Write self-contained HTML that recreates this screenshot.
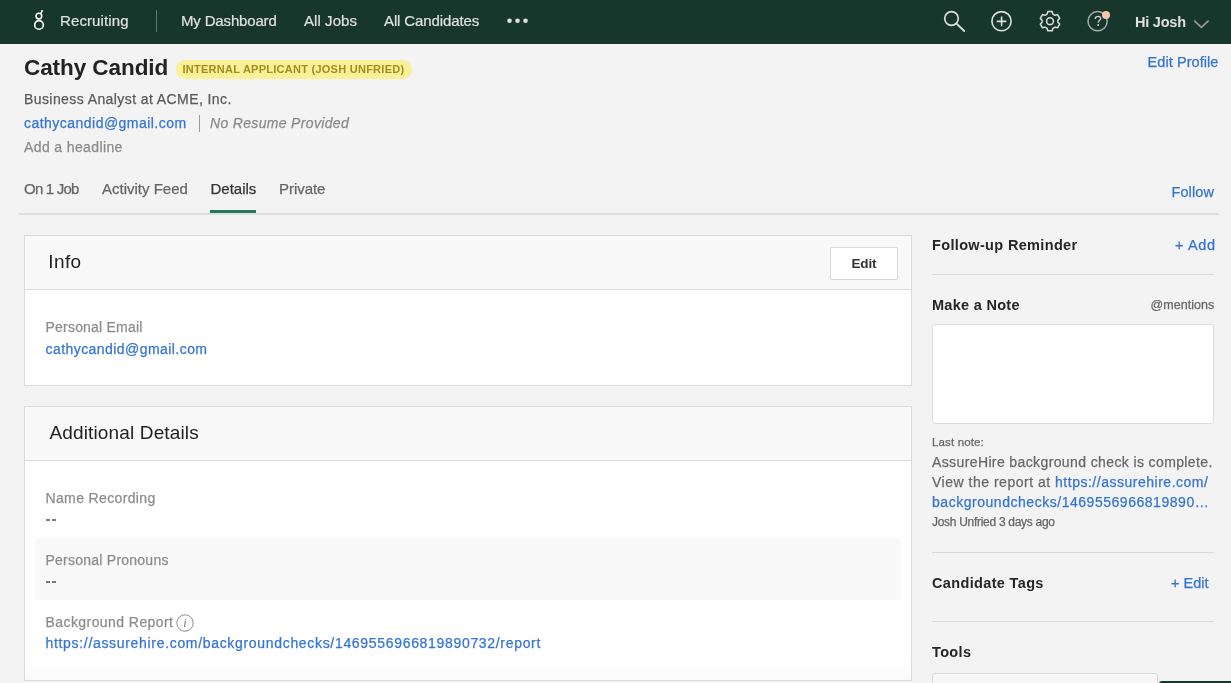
<!DOCTYPE html>
<html><head><meta charset="utf-8">
<style>
*{box-sizing:border-box;margin:0;padding:0}
html,body{-webkit-font-smoothing:antialiased;width:1231px;height:683px;overflow:hidden;background:#f3f3f3;font-family:"Liberation Sans",sans-serif;color:#222}
.t{position:absolute;white-space:nowrap;line-height:1}
.t:not(.rh):not([style*="font-weight:bold"]){-webkit-text-stroke:0.25px currentColor}
.nt:not([style*="font-weight:bold"]){-webkit-text-stroke:0.2px currentColor}
.abs{position:absolute}
.lk{color:#3574d4}
#nav{position:absolute;left:0;top:0;width:1231px;height:44px;background:#17372d}
.nt{position:absolute;top:12.8px;font-size:15px;color:#e0e0e0;line-height:1;white-space:nowrap}
.lbl{font-size:14px;color:#8c8c8c}
.rh{font-size:14.5px;font-weight:bold;color:#262626}
.hr{position:absolute;left:932px;width:282px;height:1px;background:#dadada}
</style></head>
<body><div id="root" style="position:absolute;left:0;top:0;width:1231px;height:683px;will-change:transform">
<div id="nav">
  <svg class="abs" style="left:0;top:0" width="1231" height="44" viewBox="0 0 1231 44">
    <!-- logo -->
    <circle cx="39" cy="24.9" r="4.3" fill="none" stroke="#fff" stroke-width="1.6"/>
    <circle cx="38.9" cy="16.1" r="2.85" fill="none" stroke="#fff" stroke-width="1.5"/>
    <path d="M40.5 13.7 L42 11.4" stroke="#fff" stroke-width="1.4" fill="none"/>
    <circle cx="42.1" cy="11" r="1.05" fill="#fff"/>
    <!-- separator -->
    <rect x="156" y="10" width="1" height="22" fill="#5f766d"/>
    <!-- dots -->
    <circle cx="509.5" cy="20.8" r="2.3" fill="#e0e0e0"/>
    <circle cx="517.5" cy="20.8" r="2.3" fill="#e0e0e0"/>
    <circle cx="525.5" cy="20.8" r="2.3" fill="#e0e0e0"/>
    <!-- search -->
    <circle cx="951.5" cy="18.5" r="6.8" fill="none" stroke="#dedede" stroke-width="1.7"/>
    <path d="M956.3 23.3 L964.2 31" stroke="#dedede" stroke-width="1.8" stroke-linecap="round"/>
    <!-- plus -->
    <circle cx="1001.5" cy="21.2" r="9.6" fill="none" stroke="#dedede" stroke-width="1.6"/>
    <path d="M996.8 21.4 H1006.4 M1001.6 16.6 V26.2" stroke="#dedede" stroke-width="1.6"/>
    <!-- gear -->
    <g transform="translate(1050 21.2)" fill="none" stroke="#dedede" stroke-width="1.5">
      <path d="M-2.2 -9.6 L2.2 -9.6 L2.9 -7.1 L5.0 -5.9 L7.5 -6.6 L9.7 -2.8 L7.9 -1.0 L7.9 1.0 L9.7 2.8 L7.5 6.6 L5.0 5.9 L2.9 7.1 L2.2 9.6 L-2.2 9.6 L-2.9 7.1 L-5.0 5.9 L-7.5 6.6 L-9.7 2.8 L-7.9 1.0 L-7.9 -1.0 L-9.7 -2.8 L-7.5 -6.6 L-5.0 -5.9 L-2.9 -7.1 Z" stroke-linejoin="round"/>
      <circle cx="0" cy="0" r="3.4"/>
    </g>
    <!-- help -->
    <circle cx="1097.6" cy="21.2" r="9.6" fill="none" stroke="#a9a9a9" stroke-width="1.5"/>
    <path d="M1095.3 18.9 C1095.3 17.2 1096.5 16.3 1098 16.3 C1099.6 16.3 1100.7 17.3 1100.7 18.6 C1100.7 20.2 1098.2 20.6 1098.2 22.7" fill="none" stroke="#d0d0d0" stroke-width="1.3"/><circle cx="1098.2" cy="25" r="0.95" fill="#d0d0d0"/>
    <circle cx="1106" cy="14.9" r="4" fill="#f5c6aa"/>
    <!-- chevron -->
    <path d="M1194.2 20.6 L1201.4 27.4 L1208.6 20.6" fill="none" stroke="#9a9a9a" stroke-width="1.6"/>
  </svg>
  <div class="nt" style="left:60px;letter-spacing:0.11px">Recruiting</div>
  <div class="nt" style="left:181px;letter-spacing:-0.16px">My Dashboard</div>
  <div class="nt" style="left:304px;letter-spacing:0.06px">All Jobs</div>
  <div class="nt" style="left:384px;letter-spacing:-0.12px">All Candidates</div>
  <div class="nt" style="left:1135px;top:15px;font-size:14.5px;font-weight:bold;letter-spacing:-0.23px">Hi Josh</div>
</div>

<div class="t" style="left:24px;top:56.9px;font-size:22.5px;font-weight:bold;color:#222;letter-spacing:-0.07px">Cathy Candid</div>
<div class="abs" style="left:176px;top:60px;height:19px;width:236px;background:#faf098;border-radius:10px"></div>
<div class="t" style="left:182.5px;top:63.7px;font-size:11px;font-weight:bold;color:#a48c1c;letter-spacing:0.26px">INTERNAL APPLICANT (JOSH UNFRIED)</div>
<div class="t lk" style="left:1147.6px;top:54.7px;font-size:14.5px;letter-spacing:0.06px">Edit Profile</div>
<div class="t" style="left:24px;top:92.3px;font-size:14px;color:#5a5a5a;letter-spacing:0.415px">Business Analyst at ACME, Inc.</div>
<div class="t lk" style="left:24px;top:116px;font-size:14px;letter-spacing:0.47px">cathycandid@gmail.com</div>
<div class="abs" style="left:199px;top:115px;width:1px;height:17px;background:#9a9a9a"></div>
<div class="t" style="left:210px;top:116px;font-size:14px;font-style:italic;color:#8a8a8a;letter-spacing:0.33px">No Resume Provided</div>
<div class="t" style="left:24px;top:140.2px;font-size:14px;color:#8a8a8a;letter-spacing:0.38px">Add a headline</div>

<div class="t" style="left:24px;top:181.3px;font-size:15px;color:#666;letter-spacing:-0.79px">On 1 Job</div>
<div class="t" style="left:102px;top:181.3px;font-size:15px;color:#666">Activity Feed</div>
<div class="t" style="left:210.5px;top:181.3px;font-size:15px;color:#333;letter-spacing:0px">Details</div>
<div class="t" style="left:279px;top:181.3px;font-size:15px;color:#666;letter-spacing:-0.05px">Private</div>
<div class="t lk" style="left:1171.5px;top:184.7px;font-size:14.5px;letter-spacing:0.1px">Follow</div>
<div class="abs" style="left:19px;top:213px;width:1200px;height:2px;background:#dedede"></div>
<div class="abs" style="left:210px;top:210px;width:46px;height:3px;background:#23795a"></div>

<!-- Info card -->
<div class="abs" style="left:24px;top:235px;width:888px;height:151px;background:#fff;border:1px solid #dcdcdc"></div>
<div class="abs" style="left:25px;top:236px;width:886px;height:54px;background:#f9f9f9;border-bottom:1px solid #dcdcdc"></div>
<div class="t" style="left:48.3px;top:251.7px;font-size:19px;color:#222;letter-spacing:0.4px;-webkit-text-stroke:0">Info</div>
<div class="abs" style="left:830px;top:247px;width:68px;height:33px;background:#fff;border:1px solid #d8d8d8;border-radius:2px"></div>
<div class="t" style="left:851.5px;top:256.7px;font-size:13.5px;font-weight:bold;color:#333;letter-spacing:-0.13px">Edit</div>
<div class="t lbl" style="left:45.5px;top:320.1px;letter-spacing:0.21px">Personal Email</div>
<div class="t lk" style="left:45.5px;top:342.1px;font-size:14px;letter-spacing:0.44px">cathycandid@gmail.com</div>

<!-- Additional details -->
<div class="abs" style="left:24px;top:406px;width:888px;height:275px;background:#fff;border:1px solid #dcdcdc"></div>
<div class="abs" style="left:25px;top:407px;width:886px;height:54px;background:#f9f9f9;border-bottom:1px solid #dcdcdc"></div>
<div class="t" style="left:49.5px;top:422.7px;font-size:19px;color:#222;letter-spacing:0.14px;-webkit-text-stroke:0">Additional Details</div>
<div class="t lbl" style="left:45.5px;top:491.1px;letter-spacing:0.36px">Name Recording</div>
<div class="abs" style="left:46px;top:519px;width:4px;height:2px;background:#7a7a7a"></div><div class="abs" style="left:52px;top:519px;width:4px;height:2px;background:#7a7a7a"></div>
<div class="abs" style="left:35px;top:538px;width:866px;height:62px;background:#f9f9f9"></div>
<div class="t lbl" style="left:45.5px;top:553px;letter-spacing:0.24px">Personal Pronouns</div>
<div class="abs" style="left:46px;top:581px;width:4px;height:2px;background:#7a7a7a"></div><div class="abs" style="left:52px;top:581px;width:4px;height:2px;background:#7a7a7a"></div>
<div class="t lbl" style="left:45.5px;top:615px;letter-spacing:0.43px">Background Report</div>
<svg class="abs" style="left:175px;top:613px" width="20" height="20" viewBox="0 0 20 20">
  <circle cx="10" cy="10" r="8.2" fill="none" stroke="#8c8c8c" stroke-width="1"/>
  <text x="10" y="14.2" font-family="Liberation Serif" font-style="italic" font-size="12" fill="#777" text-anchor="middle">i</text>
</svg>
<div class="t lk" style="left:45.5px;top:636px;font-size:14px;letter-spacing:0.68px">https://assurehire.com/backgroundchecks/1469556966819890732/report</div>

<div class="abs" style="left:25px;top:660px;width:886px;height:20px;background:linear-gradient(#fff,#fafafa)"></div>

<!-- Right column -->
<div class="t rh" style="left:932px;top:237.9px;letter-spacing:0.34px">Follow-up Reminder</div>
<div class="t lk" style="left:1175px;top:237.9px;font-size:14.5px;letter-spacing:0.65px">+ Add</div>
<div class="hr" style="top:274px"></div>
<div class="t rh" style="left:932px;top:298px;letter-spacing:0.29px">Make a Note</div>
<div class="t" style="left:1150.5px;top:299px;font-size:12.5px;color:#666;letter-spacing:0.05px">@mentions</div>
<div class="abs" style="left:932px;top:324px;width:282px;height:100px;background:#fff;border:1px solid #dcdcdc;border-radius:3px"></div>
<div class="t" style="left:932px;top:436.6px;font-size:11.5px;color:#656565;letter-spacing:0.14px">Last note:</div>
<div class="t" style="left:932px;top:455.4px;font-size:14px;color:#686868;letter-spacing:0.385px">AssureHire background check is complete.</div>
<div class="t" style="left:932px;top:475.4px;font-size:14px;color:#686868;letter-spacing:0.51px">View the report at <span class="lk">https://assurehire.com/</span></div>
<div class="t lk" style="left:932px;top:495.4px;font-size:14px;letter-spacing:0.53px">backgroundchecks/1469556966819890…</div>
<div class="t" style="left:932px;top:515.8px;font-size:12px;color:#656565;letter-spacing:-0.29px">Josh Unfried 3 days ago</div>
<div class="hr" style="top:552px"></div>
<div class="t rh" style="left:932px;top:575.7px;letter-spacing:0.35px">Candidate Tags</div>
<div class="t lk" style="left:1171px;top:575.7px;font-size:14.5px;letter-spacing:0.02px">+ Edit</div>
<div class="hr" style="top:621px"></div>
<div class="t rh" style="left:932px;top:644.7px;letter-spacing:0.35px">Tools</div>
<div class="abs" style="left:932px;top:673px;width:226px;height:20px;background:#f7f7f7;border:1px solid #dcdcdc;border-radius:3px"></div>
<div class="abs" style="left:1159px;top:681px;width:80px;height:10px;background:#17372d;border-radius:3px"></div>
</div></body></html>
